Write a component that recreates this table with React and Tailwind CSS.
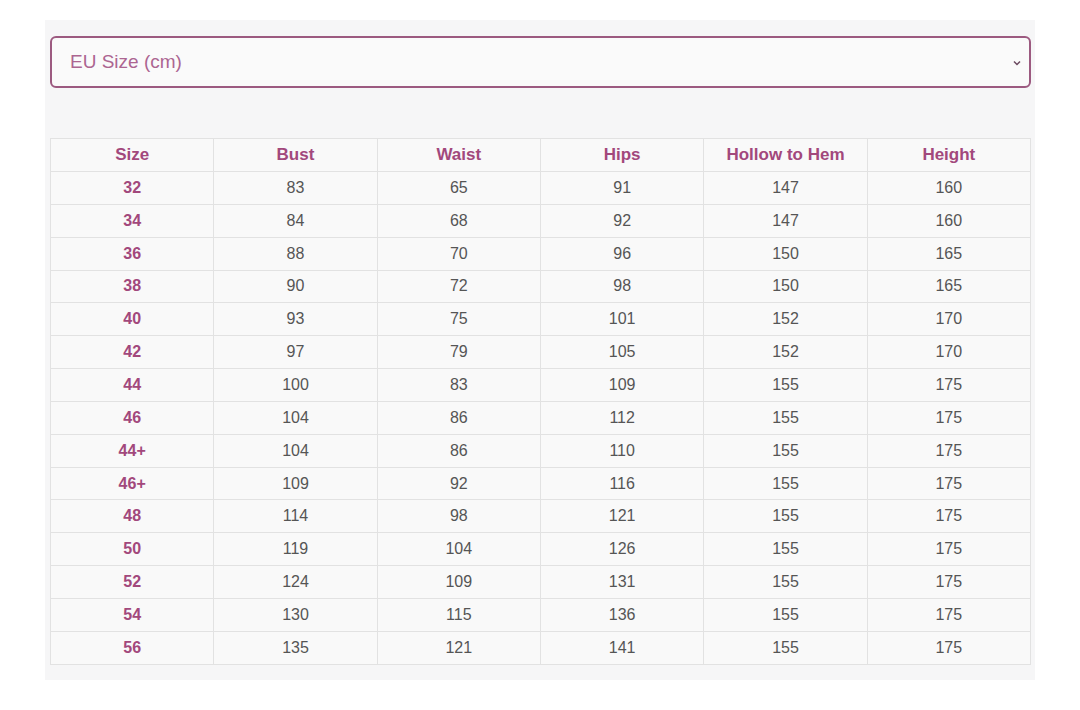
import React from 'react';

const headers = ['Size', 'Bust', 'Waist', 'Hips', 'Hollow to Hem', 'Height'];

const rows = [
  ['32', '83', '65', '91', '147', '160'],
  ['34', '84', '68', '92', '147', '160'],
  ['36', '88', '70', '96', '150', '165'],
  ['38', '90', '72', '98', '150', '165'],
  ['40', '93', '75', '101', '152', '170'],
  ['42', '97', '79', '105', '152', '170'],
  ['44', '100', '83', '109', '155', '175'],
  ['46', '104', '86', '112', '155', '175'],
  ['44+', '104', '86', '110', '155', '175'],
  ['46+', '109', '92', '116', '155', '175'],
  ['48', '114', '98', '121', '155', '175'],
  ['50', '119', '104', '126', '155', '175'],
  ['52', '124', '109', '131', '155', '175'],
  ['54', '130', '115', '136', '155', '175'],
  ['56', '135', '121', '141', '155', '175'],
];

const App = () => {
  return (
    <div className="w-[1080px] h-[710px] bg-white pt-[20px] pl-[45px] font-['Liberation_Sans',Arial,sans-serif]">
      <div className="w-[990px] h-[660px] bg-[#f6f6f7] pt-[16px] pl-[5px]">
        {/* Size system select */}
        <div className="w-[981px] h-[52px] rounded-[6px] border-2 border-[#9c5a80] bg-[#fafafa] flex items-center justify-between pl-[18px] pr-[7px]">
          <span className="text-[19px] text-[#ac6591]">EU Size (cm)</span>
          <svg width="10" height="8" viewBox="0 0 10 8" className="mt-[1px]">
            <path d="M2 2.5 L5 5.5 L8 2.5" fill="none" stroke="#6b4a60" strokeWidth="1.5" />
          </svg>
        </div>

        {/* Size chart */}
        <div className="mt-[50px] w-[981px] grid grid-cols-6 border-l border-t border-[#e2e2e2] bg-[#f9f9f9]">
          {headers.map((h) => (
            <div
              key={h}
              className="h-[33px] flex items-center justify-center border-r border-b border-[#e2e2e2] text-[17px] font-bold text-[#a2487c]"
            >
              {h}
            </div>
          ))}
          {rows.map((row) =>
            row.map((v, i) => (
              <div
                key={row[0] + '-' + i}
                className={`h-[32.85px] flex items-center justify-center border-r border-b border-[#e2e2e2] text-[16px] ${
                  i === 0 ? 'font-bold text-[#a2487c]' : 'text-[#555555]'
                }`}
              >
                {v}
              </div>
            ))
          )}
        </div>
      </div>
    </div>
  );
};

export default App;
